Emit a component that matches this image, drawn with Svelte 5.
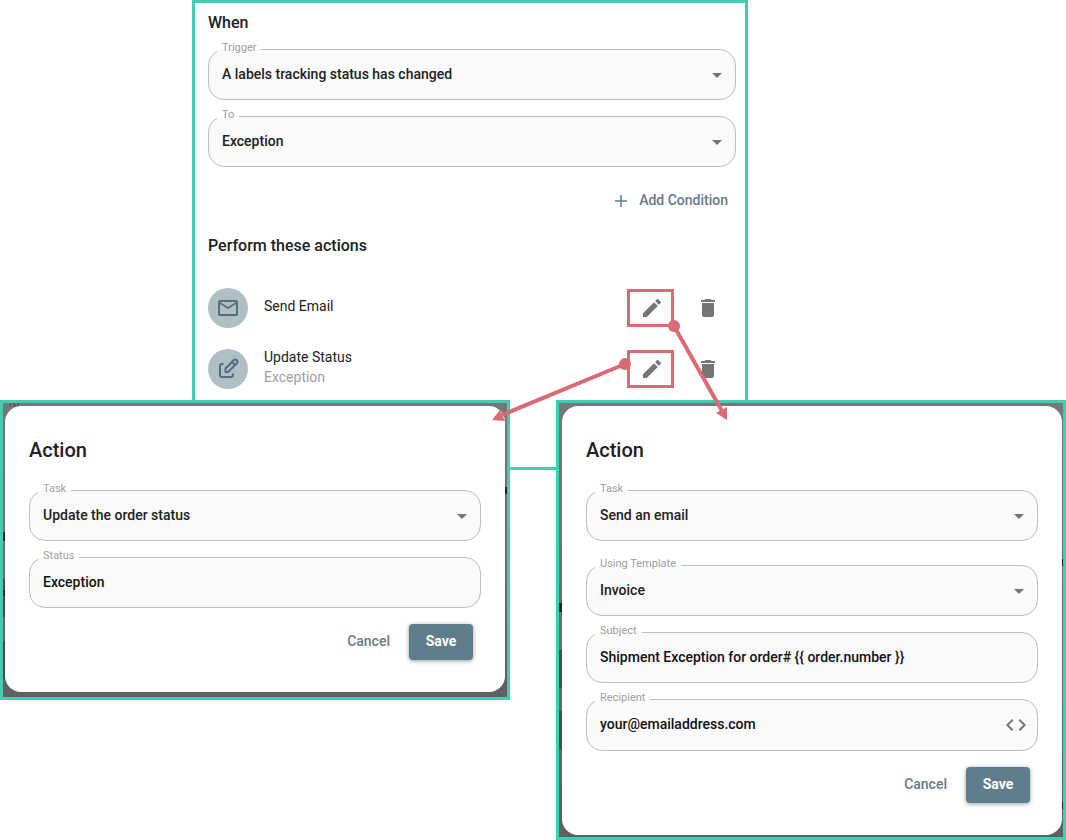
<script>
	// Workflow editor with its two action dialogs, annotated with callout arrows.
	const icons = {
		plus: 'M18 12.75H12.75V18H11.25V12.75H6V11.25H11.25V6H12.75V11.25H18Z',
		pencil:
			'M20.71,7.04C21.1,6.65 21.1,6 20.71,5.63L18.37,3.29C18,2.9 17.35,2.9 16.96,3.29L15.12,5.12L18.87,8.87M3,17.25V21H6.75L17.81,9.93L14.06,6.18L3,17.25Z',
		trash:
			'M19,4H15.5L14.5,3H9.5L8.5,4H5V6H19M6,19A2,2 0 0,0 8,21H16A2,2 0 0,0 18,19V7H6V19Z',
		email:
			'M22 6C22 4.9 21.1 4 20 4H4C2.9 4 2 4.9 2 6V18C2 19.1 2.9 20 4 20H20C21.1 20 22 19.1 22 18V6M20 6L12 11L4 6H20M20 18H4V8L12 13L20 8V18Z',
		code: 'M14.6,16.6L19.2,12L14.6,7.4L16,6L22,12L16,18L14.6,16.6M9.4,16.6L4.8,12L9.4,7.4L8,6L2,12L8,18L9.4,16.6Z'
	};

	const actions = [
		{ title: 'Send Email', icon: 'email' },
		{ title: 'Update Status', detail: 'Exception', icon: 'edit' }
	];

	let trigger = $state('A labels tracking status has changed');
	let to = $state('Exception');
	let statusTask = $state('Update the order status');
	let status = $state('Exception');
	let emailTask = $state('Send an email');
	let template = $state('Invoice');
	let subject = $state('Shipment Exception for order# {{ order.number }}');
	let recipient = $state('your@emailaddress.com');
</script>

{#snippet icon(name)}
	<svg class="icon" viewBox="0 0 24 24" aria-hidden="true"><path d={icons[name]} /></svg>
{/snippet}

{#snippet selectField(id, label, value, spaced = false)}
	<fieldset class="field" class:spaced>
		<legend><label for={id}>{label}</label></legend>
		<div class="control">
			<select {id}><option>{value}</option></select>
			<svg class="caret" viewBox="0 0 10 5" aria-hidden="true"><path d="M0 0H10L5 5Z" /></svg>
		</div>
	</fieldset>
{/snippet}

{#snippet dialogActions()}
	<div class="dialog-actions">
		<button type="button" class="btn flat">Cancel</button>
		<button type="submit" class="btn primary">Save</button>
	</div>
{/snippet}

<main class="board">
	<section class="workflow">
		<h2>When</h2>
		{@render selectField('trigger', 'Trigger', trigger)}
		{@render selectField('to', 'To', to)}
		<div class="add-row">
			<button type="button" class="btn flat add">{@render icon('plus')}Add Condition</button>
		</div>
		<h2>Perform these actions</h2>
		<ul class="actions">
			{#each actions as action}
				<li>
					<span class="avatar">
						{#if action.icon === 'edit'}
							<svg class="icon outline" viewBox="0 0 24 24" aria-hidden="true">
								<path d="M7.5 7H6A2 2 0 0 0 4 9V18A2 2 0 0 0 6 20H15A2 2 0 0 0 17 18V16.5" />
								<path d="M9.5 15V11.5L17.8 3.3A2.1 2.1 0 0 1 20.8 6.3L12.2 15ZM16 5L19 8" />
							</svg>
						{:else}
							{@render icon(action.icon)}
						{/if}
					</span>
					<div class="text">
						<span>{action.title}</span>
						{#if action.detail}<span class="detail">{action.detail}</span>{/if}
					</div>
					<button type="button" class="edit" aria-label="Edit {action.title}">
						{@render icon('pencil')}
					</button>
					<button type="button" class="remove" aria-label="Delete {action.title}">
						{@render icon('trash')}
					</button>
				</li>
			{/each}
		</ul>
	</section>

	<div class="dialogs">
		<div class="frame status-frame">
			<span class="ghost" aria-hidden="true">To</span>
			<form class="dialog" onsubmit={(e) => e.preventDefault()}>
				<h1>Action</h1>
				{@render selectField('status-task', 'Task', statusTask)}
				<fieldset class="field">
					<legend><label for="status">Status</label></legend>
					<div class="control"><input id="status" type="text" bind:value={status} /></div>
				</fieldset>
				{@render dialogActions()}
			</form>
		</div>

		<div class="frame email-frame">
			<form class="dialog" onsubmit={(e) => e.preventDefault()}>
				<h1>Action</h1>
				{@render selectField('email-task', 'Task', emailTask)}
				{@render selectField('template', 'Using Template', template, true)}
				<fieldset class="field">
					<legend><label for="subject">Subject</label></legend>
					<div class="control"><input id="subject" type="text" bind:value={subject} /></div>
				</fieldset>
				<fieldset class="field">
					<legend><label for="recipient">Recipient</label></legend>
					<div class="control">
						<input id="recipient" type="text" bind:value={recipient} />
						<button type="button" class="code" aria-label="Insert variable">
							{@render icon('code')}
						</button>
					</div>
				</fieldset>
				{@render dialogActions()}
			</form>
		</div>
	</div>

	<svg class="arrows" viewBox="0 0 1066 840" aria-hidden="true">
		<circle cx="674" cy="326" r="6" />
		<path class="line" d="M674 326L722 411" />
		<path d="M716 413L727 407V420Z" />
		<circle cx="625" cy="364" r="6" />
		<path class="line" d="M625 364L502 415" />
		<path d="M500 410L492 420L505 421Z" />
	</svg>
</main>

<style>
	:global(body) {
		margin: 0;
		background: #fff;
	}
	.board {
		--teal: #3cd0b0;
		--slate: #607d8b;
		--red: #db6a75;
		position: relative;
		font-family: Roboto, sans-serif;
		font-size: 14px;
		line-height: 20px;
		color: #212121;
	}
	.workflow {
		box-sizing: border-box;
		margin: 0 318px 0 192px;
		padding: 8px 9px 78px 13px;
		border: 3px solid var(--teal);
		background: #fff;
	}
	h1,
	h2 {
		margin: 0;
		font-weight: 500;
	}
	h1 {
		margin-bottom: 16px;
		font-size: 20px;
		line-height: 32px;
	}
	h2 {
		font-size: 16px;
		line-height: 24px;
		margin-bottom: 6px;
	}

	/* Outlined field: the legend cuts the notch in the border */
	.field {
		min-width: 0;
		margin: 0 0 8px;
		padding: 0 0 8px;
		border: 1px solid #bdbdbd;
		border-radius: 16px;
		background: #fafafa;
	}
	.field.spaced {
		margin-top: 16px;
	}
	legend {
		margin-left: 8px;
		padding: 0 5px 4px;
		font-size: 11px;
		line-height: 13px;
		color: #9e9e9e;
	}
	legend label {
		display: block;
	}
	.control {
		display: grid;
		grid-template-columns: minmax(0, 1fr) auto;
		align-items: center;
	}
	select,
	input {
		grid-row: 1;
		grid-column: 1 / -1;
		box-sizing: border-box;
		width: 100%;
		height: 33px;
		margin: 0;
		padding: 0 13px 2px;
		border: 0;
		outline: none;
		appearance: none;
		background: none;
		font: inherit;
		font-weight: 500;
		color: inherit;
	}
	input {
		color: #111;
	}
	.caret {
		grid-row: 1;
		grid-column: 2;
		width: 10px;
		height: 5px;
		margin: 2px 13px 0 0;
		fill: #757575;
		pointer-events: none;
	}
	.icon {
		display: block;
		flex: none;
		width: 24px;
		height: 24px;
		fill: currentColor;
	}

	button {
		display: flex;
		align-items: center;
		justify-content: center;
		box-sizing: border-box;
		margin: 0;
		padding: 0;
		border: 0;
		background: none;
		font: inherit;
		color: #757575;
		cursor: pointer;
	}
	.btn {
		height: 36px;
		padding: 0 8px 2px;
		border-radius: 4px;
		font-weight: 500;
	}
	.flat {
		color: var(--slate);
	}
	.primary {
		width: 64px;
		background: var(--slate);
		box-shadow: 0 1px 4px rgba(0, 0, 0, 0.4);
		font-weight: 700;
		color: #fff;
	}
	.code {
		grid-row: 1;
		grid-column: 2;
		height: 34px;
		margin-right: 9px;
	}
	.add-row {
		display: flex;
		justify-content: flex-end;
		padding: 8px 0 15px;
	}
	.add {
		gap: 6px;
	}
	.add .icon {
		margin-top: 2px;
	}

	.actions {
		display: flex;
		flex-direction: column;
		gap: 21px;
		margin: 0;
		padding: 24px 0 0;
		list-style: none;
	}
	.actions li {
		display: flex;
		align-items: center;
		height: 40px;
	}
	.avatar {
		display: flex;
		align-items: center;
		justify-content: center;
		width: 40px;
		height: 40px;
		margin-right: 16px;
		border-radius: 50%;
		background: #b0bec5;
		color: #546e7a;
	}
	.outline {
		fill: none;
		stroke: currentColor;
		stroke-width: 2;
	}
	.text {
		display: flex;
		flex: 1;
		flex-direction: column;
		padding-bottom: 4px;
	}
	.detail {
		color: #9e9e9e;
	}
	.edit {
		width: 47px;
		height: 38px;
		margin-right: 22px;
		padding-left: 3px;
		border: 3px solid var(--red);
	}
	.remove {
		margin-right: 16px;
	}

	.dialogs {
		position: relative;
		display: flex;
		align-items: flex-start;
		gap: 46px;
		margin-top: -70px;
	}
	/* Dimmed page behind each dialog, with slivers of its content at the edges */
	.frame {
		--scrim: linear-gradient(#777, #6a6a6a 60%, #5f5f5f);
		--ink: linear-gradient(#222, #222);
		--disc: linear-gradient(#464b4e, #464b4e);
		position: relative;
		flex: 1;
		min-width: 0;
		overflow: hidden;
		border: 3px solid var(--teal);
	}
	.status-frame {
		padding: 3px 2px 5px;
		background:
			var(--ink) 0 129px / 2px 9px no-repeat,
			var(--ink) 0 187px / 2px 6px no-repeat,
			var(--ink) 100% 84px / 2px 7px no-repeat,
			var(--disc) 0 176px / 2px 38px no-repeat,
			var(--disc) 0 238px / 2px 38px no-repeat,
			var(--scrim);
	}
	.email-frame {
		padding: 3px 1px 2px 3px;
		background:
			var(--ink) 0 200px / 3px 9px no-repeat,
			var(--ink) 100% 156px / 1px 7px no-repeat,
			var(--ink) 100% 399px / 1px 7px no-repeat,
			var(--disc) 0 247px / 3px 38px no-repeat,
			var(--disc) 0 308px / 3px 38px no-repeat,
			var(--scrim);
	}
	.dialog {
		position: relative;
		padding: 28px 24px 32px;
		border-radius: 16px;
		background: #fff;
	}
	/* page label showing through the scrim behind the dialog corner */
	.ghost {
		position: absolute;
		top: -6px;
		left: 4px;
		font-size: 11px;
		line-height: 13px;
		color: #4a4a4a;
	}
	.dialog-actions {
		display: flex;
		justify-content: flex-end;
		gap: 11px;
		padding: 8px 8px 0 0;
	}
	.arrows {
		position: absolute;
		top: 0;
		left: 0;
		width: 100%;
		fill: var(--red);
		pointer-events: none;
	}
	.line {
		fill: none;
		stroke: var(--red);
		stroke-width: 4;
	}
</style>
